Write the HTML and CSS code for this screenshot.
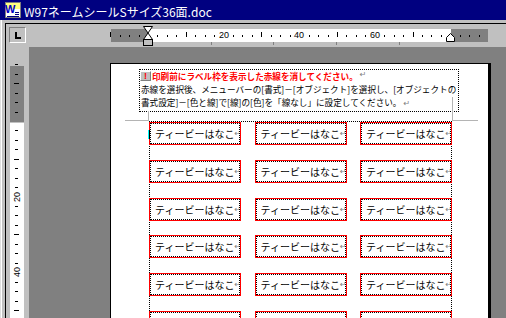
FILE: index.html
```html
<!DOCTYPE html>
<html lang="ja">
  <head>
    <meta charset="UTF-8" />
    <title>W97ネームシールSサイズ36面.doc</title>
    <link rel="stylesheet" href="styles.css">
  </head>
  <body>
    <div class="window">
      <div class="titlebar">
        <svg class="app-icon" width="16" height="16" viewBox="0 0 16 16">
          <rect x="0.5" y="0.5" width="15" height="15" fill="#fff" stroke="#808080" />
          <rect x="1" y="1" width="14" height="6" fill="#ffff80" />
          <text x="0" y="11" font-family="Liberation Sans" font-weight="bold" font-size="11" fill="#0000c0">W</text>
          <path d="M10 10.5h4M10 12.5h4M2 14.5h12" stroke="#000080" />
        </svg>
        <span class="title">W97ネームシールSサイズ36面.doc</span>
      </div>
      <div class="client">
        <div class="ruler-bar">
          <div class="tab-select"><span class="tab-l"></span></div>
          <div class="hruler" id="hruler">
            <div class="hr-dark"></div>
            <div class="hr-white"></div>
            <div class="hr-dark"></div>
            <span class="colmark" style="left: 100px"></span>
            <span class="colmark" style="left: 162px"></span>
            <span class="colmark" style="left: 225px"></span>
            <span class="colmark" style="left: 288px"></span>
            <svg class="indent-left" width="11" height="21" viewBox="0 0 11 21">
              <polygon points="0.5,0.5 9.5,0.5 5,7" fill="#fff" stroke="#000" />
              <polygon points="5,7 9.5,13.5 0.5,13.5" fill="#fff" stroke="#000" />
              <rect x="0.5" y="13.5" width="9" height="6" fill="#c0c0c0" stroke="#000" />
            </svg>
            <svg class="indent-right" width="10" height="9" viewBox="0 0 10 9">
              <polygon points="0.5,8.5 0.5,4.5 4.5,0.5 8.5,4.5 8.5,8.5" fill="#fff" stroke="#000" />
            </svg>
          </div>
        </div>
        <div class="work">
          <div class="vside">
            <div class="vruler" id="vruler">
              <div class="vr-dark"></div>
              <div class="vr-white"></div>
            </div>
          </div>
          <div class="desk">
            <div class="page">
              <div class="textbox">
                <div class="tb-line warn-line">
                  <span class="warn">!</span>印刷前にラベル枠を表示した赤線を消してください。<span class="pm">↵</span>
                </div>
                <div class="tb-line">赤線を選択後、メニューバーの[書式]－[オブジェクト]を選択し、[オブジェクトの</div>
                <div class="tb-line">書式設定]－[色と線]で[線]の[色]を「線なし」に設定してください。<span class="pm">↵</span></div>
              </div>
              <div class="sheet">
                <div class="labels" id="labels"></div>
              </div>
              <span class="mark mark-lh"></span>
              <span class="mark mark-lv"></span>
              <span class="mark mark-rh"></span>
              <span class="mark mark-rv"></span>
              <span class="caret"></span>
            </div>
          </div>
        </div>
      </div>
    </div>

    <script>
      const MM = 3.7795;

      // horizontal ruler, zero at the left indent
      const hruler = document.getElementById("hruler");
      for (let mm = -10; mm <= 87.5; mm += 2.5) {
        if (mm === 0 || mm === 80) continue;
        const tick = document.createElement("span");
        if (mm % 20 === 0) {
          tick.className = "hnum";
          tick.textContent = mm;
        } else if (mm % 10 === 0) {
          tick.className = "htick long";
        } else {
          tick.className = "htick";
        }
        tick.style.left = Math.round(37 + mm * MM) + "px";
        hruler.appendChild(tick);
      }

      // vertical ruler, zero at the top margin
      const vruler = document.getElementById("vruler");
      for (let mm = -15; mm <= 52.5; mm += 2.5) {
        if (mm === 0) continue;
        const tick = document.createElement("span");
        if (mm % 20 === 0) {
          tick.className = "vnum";
          tick.textContent = mm;
        } else if (mm % 10 === 0) {
          tick.className = "vtick long";
        } else {
          tick.className = "vtick";
        }
        tick.style.top = Math.round(58 + mm * MM) + "px";
        vruler.appendChild(tick);
      }

      const labels = document.getElementById("labels");
      for (let i = 0; i < 18; i++) {
        const label = document.createElement("div");
        label.className = "label";
        label.innerHTML =
          '<div class="label-in">ティービーはなこ<span class="pm">↵</span></div>';
        labels.appendChild(label);
      }
    </script>
  </body>
</html>
```

FILE: styles.css
```css
body {
  margin: 0;
  width: 506px;
  height: 318px;
  overflow: hidden;
  background-color: #c0c0c0;
  font-family: "Noto Sans CJK JP", sans-serif;
}
.window {
  height: 318px;
  display: flex;
  flex-direction: column;
  box-shadow: inset 1px 0 0 #dfdfdf, inset 2px 0 0 #fff;
}
.titlebar {
  height: 20px;
  flex: none;
  display: flex;
  align-items: center;
  gap: 3px;
  padding-left: 5px;
  background-color: #000080;
  color: #fff;
  font-size: 12px;
}
.title {
  padding-top: 2px;
  white-space: nowrap;
}
.client {
  flex: 1;
  min-height: 0;
  display: flex;
  flex-direction: column;
  margin: 3px 0 0 5px;
  border-top: 1px solid #000;
  border-left: 1px solid #000;
}
.ruler-bar {
  height: 23px;
  flex: none;
  display: flex;
  align-items: flex-start;
  padding: 3px 0 0 3px;
  box-sizing: border-box;
}
.tab-select {
  width: 17px;
  height: 16px;
  box-sizing: border-box;
  border: 1px solid;
  border-color: #808080 #fff #fff #808080;
  display: flex;
  align-items: center;
  justify-content: center;
}
.tab-l {
  width: 4px;
  height: 5px;
  margin: 1px 0 0 1px;
  border-left: 2px solid #000;
  border-bottom: 2px solid #000;
}
.hruler {
  position: relative;
  width: 377px;
  height: 13px;
  margin: 2px 0 0 85px;
  display: flex;
}
.hr-dark {
  width: 37px;
  background-color: #808080;
}
.hr-white {
  width: 303px;
  background-color: #fff;
}
.htick {
  position: absolute;
  top: 6px;
  width: 1px;
  height: 2px;
  background-color: #000;
}
.htick.long {
  top: 3px;
  height: 5px;
}
.hnum {
  position: absolute;
  top: 1px;
  transform: translateX(-50%);
  font: 9px/11px "Liberation Sans", sans-serif;
  color: #000;
}
.colmark {
  position: absolute;
  top: 13px;
  width: 1px;
  height: 3px;
  background-color: #808080;
}
.indent-left {
  position: absolute;
  left: 32px;
  top: -3px;
}
.indent-right {
  position: absolute;
  left: 335px;
  top: 4px;
}
.work {
  flex: 1;
  min-height: 0;
  display: flex;
}
.vside {
  width: 23px;
  flex: none;
  padding: 16px 0 0 4px;
  box-sizing: border-box;
}
.vruler {
  position: relative;
  width: 14px;
  height: 260px;
  display: flex;
  flex-direction: column;
}
.vr-dark {
  flex: none;
  height: 56px;
  margin-top: 3px;
  background-color: #808080;
}
.vr-white {
  flex: 1;
  margin-top: 1px;
  background-color: #fff;
}
.vtick {
  position: absolute;
  left: 5px;
  width: 3px;
  height: 1px;
  background-color: #000;
}
.vtick.long {
  left: 4px;
  width: 5px;
}
.vnum {
  position: absolute;
  left: 7px;
  transform: translate(-50%, -50%) rotate(-90deg);
  font: 9px/11px "Liberation Sans", sans-serif;
}
.desk {
  flex: 1;
  min-width: 0;
  padding: 16px 0 0 81px;
  background-color: #808080;
  overflow: hidden;
}
.page {
  position: relative;
  width: 379px;
  height: 300px;
  box-sizing: border-box;
  padding-top: 5px;
  background-color: #fff;
  border: 1px solid #000;
  border-bottom: none;
  box-shadow: 2px 0 0 #000;
}
.textbox {
  width: 320px;
  height: 43px;
  margin-left: 28px;
  box-sizing: border-box;
  padding-left: 1px;
  border: 1px dotted #000;
  font-size: 8.6px;
  line-height: 13px;
  white-space: nowrap;
  overflow: hidden;
}
.warn-line {
  display: flex;
  align-items: flex-start;
  color: #f00;
  font-weight: bold;
}
.warn {
  width: 11px;
  height: 10px;
  margin: 1px 1px 0 -1px;
  box-sizing: border-box;
  border: 1px solid;
  border-color: #fff #808080 #808080 #fff;
  background-color: #c0c0c0;
  font: bold 9px/8px "Liberation Sans", sans-serif;
  text-align: center;
}
.pm {
  margin-left: 2px;
  color: #808080;
  font: 8px "DejaVu Sans", sans-serif;
  font-weight: normal;
}
.sheet {
  width: 303px;
  height: 220px;
  margin: 9px 0 0 38px;
  box-sizing: border-box;
  border: 1px dotted #000;
  border-bottom: none;
}
.labels {
  margin: 0 -1px;
  display: grid;
  grid-template-columns: repeat(3, 92px);
  justify-content: space-between;
  row-gap: 14.75px;
}
.label {
  height: 23px;
  box-sizing: border-box;
  border: 1px solid #f00;
}
.label-in {
  height: 100%;
  box-sizing: border-box;
  display: flex;
  align-items: center;
  padding-left: 4px;
  border: 1px dotted #000;
  font-size: 10px;
  white-space: nowrap;
  overflow: hidden;
}
.label-in .pm {
  margin-left: 0;
}
.mark {
  position: absolute;
  background-color: #b4b4b4;
}
.mark-lh {
  left: 14px;
  top: 56px;
  width: 24px;
  height: 1px;
}
.mark-lv {
  left: 37px;
  top: 47px;
  width: 1px;
  height: 9px;
}
.mark-rh {
  left: 341px;
  top: 56px;
  width: 26px;
  height: 1px;
}
.mark-rv {
  left: 341px;
  top: 33px;
  width: 1px;
  height: 23px;
}
.caret {
  position: absolute;
  left: 37px;
  top: 66px;
  width: 2px;
  height: 9px;
  background: linear-gradient(90deg, #0ff 50%, #000 50%);
}
```
